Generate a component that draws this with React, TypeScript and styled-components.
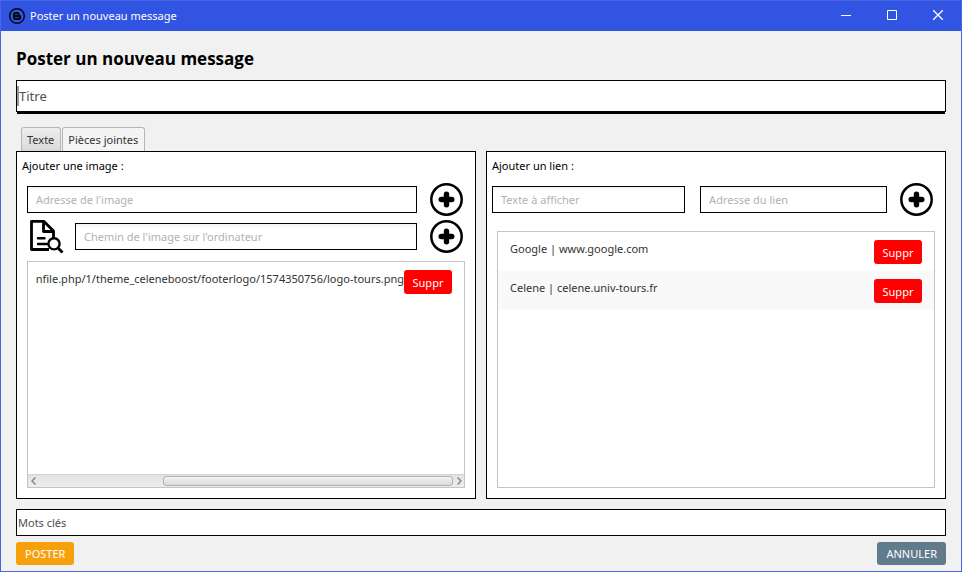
import React from "react";
import styled, { createGlobalStyle } from "styled-components";

const GlobalStyle = createGlobalStyle`
  *, *::before, *::after { box-sizing: border-box; }
  body { margin: 0; }
  body, button, input { font-family: "Noto Sans", "Open Sans", sans-serif; font-size: 11px; }
  button { cursor: pointer; margin: 0; }
`;

const Window = styled.div`
  display: flex;
  flex-direction: column;
  min-height: 100vh;
  background: #f1f1f1;
  border: 1px solid #4666e4;
  color: #000;
`;

const TitleBar = styled.header`
  display: flex;
  align-items: center;
  height: 30px;
  padding-left: 8px;
  background: #3254e2;
  color: #fff;
`;

const WindowTitle = styled.span`
  flex: 1;
  margin-left: 5px;
  line-height: 16px;
`;

const WindowButton = styled.button`
  display: flex;
  align-items: center;
  justify-content: center;
  width: 46px;
  height: 30px;
  padding: 0 0 2px;
  border: 0;
  background: none;
  color: #fff;
`;

const Content = styled.main`
  display: flex;
  flex-direction: column;
  flex: 1;
  padding: 16px 15px 6px;
`;

const Heading = styled.h1`
  margin: 0 0 9px;
  font-family: "Open Sans", "Noto Sans", sans-serif;
  font-size: 17px;
  line-height: 24px;
  font-weight: 700;
`;

const PlainInput = styled.input`
  width: 100%;
  height: 27px;
  padding: 0 1px;
  border: 1px solid #000;
  border-radius: 0;
  background: #fff;
  outline: 0;
  &::placeholder { color: #4d4d4d; opacity: 1; }
`;

const TitleField = styled.div`
  display: flex;
  align-items: center;
  height: 32px;
  border: 1px solid #000;
  background: #fff;
  box-shadow: 0 3px 0 -1px #000;
`;

const TitleInput = styled.input`
  flex: 1;
  min-width: 0;
  height: 20px;
  padding: 0;
  border: 0;
  border-left: 2px solid #999;
  outline: 0;
  font-size: 13px;
  background: none;
  &::placeholder { color: #4d4d4d; opacity: 1; }
`;

const Tabs = styled.div`
  display: flex;
  gap: 1px;
  margin-top: 15px;
  padding-left: 5px;
`;

const Tab = styled.button<{ $active?: boolean }>`
  height: 24px;
  padding: 0 6px 0 5px;
  border: 1px solid #b5b5b5;
  border-bottom: 0;
  border-radius: 3px 3px 0 0;
  color: #333;
  background: ${(p) => (p.$active ? "#f4f4f4" : "linear-gradient(#ededed, #dadada)")};
`;

const Panels = styled.div`
  display: grid;
  grid-template-columns: minmax(0, 1fr) minmax(0, 1fr);
  gap: 10px;
  flex: 1;
  margin-bottom: 10px;
`;

const Panel = styled.section`
  display: flex;
  flex-direction: column;
  border: 1px solid #000;
  background: #fff;
  padding: 6px 10px 10px;
`;

const PanelTitle = styled.h2`
  margin: 0 -5px 9px;
  font-size: 11px;
  line-height: 16px;
  font-weight: 400;
`;

const FormRow = styled.form<{ $wide?: boolean }>`
  display: flex;
  align-items: center;
  height: 33px;
  gap: 13px;
  margin: 0 2px 4px ${(p) => (p.$wide ? "-5px" : "0")};
`;

const Fields = styled.div`
  display: grid;
  grid-template-columns: 31fr 30fr;
  flex: 1;
  min-width: 0;
  gap: 15px;
`;

const Field = styled.input`
  flex: 1;
  min-width: 0;
  height: 27px;
  padding: 0 8px;
  border: 1px solid #000;
  border-radius: 0;
  outline: 0;
  background: linear-gradient(#f1f1f1, #fff 4px);
  &::placeholder { color: #b2b2b2; opacity: 1; }
`;

const IconButton = styled.button`
  display: flex;
  flex: none;
  padding: 0;
  border: 0;
  background: none;
  color: #000;

  svg { overflow: visible; }
`;

const List = styled.div<{ $offset?: boolean }>`
  display: flex;
  flex-direction: column;
  flex: 1;
  margin-top: ${(p) => (p.$offset ? "11px" : "4px")};
  border: 1px solid #c4c4c4;
  color: #333;
`;

const Items = styled.ul`
  flex: 1;
  margin: 0;
  padding: 0;
  list-style: none;
`;

const Item = styled.li<{ $alignEnd?: boolean }>`
  display: flex;
  align-items: flex-start;
  height: 39px;
  padding: 8px 12px;
  padding-left: ${(p) => (p.$alignEnd ? "0" : "12px")};
  &:nth-child(even) { background: #f9f9f9; }
`;

const ItemText = styled.span<{ $alignEnd?: boolean }>`
  display: flex;
  flex: 1;
  min-width: 0;
  overflow: hidden;
  white-space: nowrap;
  line-height: 18px;
  justify-content: ${(p) => (p.$alignEnd ? "flex-end" : "flex-start")};
`;

const tones = {
  danger: { colour: "#ff0000", height: "24px", padding: "0 8px" },
  primary: { colour: "#f4a10b", height: "23px", padding: "0 9px" },
  neutral: { colour: "#5f7b8c", height: "23px", padding: "0 9px" },
};

const ActionButton = styled.button<{ $tone: keyof typeof tones }>`
  flex: none;
  min-width: 48px;
  height: ${(p) => tones[p.$tone].height};
  padding: ${(p) => tones[p.$tone].padding};
  border: 0;
  border-radius: 3px;
  background: ${(p) => tones[p.$tone].colour};
  color: #fff;
`;

const ScrollBar = styled.div`
  display: flex;
  align-items: center;
  height: 13px;
  border-top: 1px solid #d4d4d4;
  background: linear-gradient(#e2e2e2, #ededed);
`;

const ScrollArrow = styled.button`
  display: flex;
  flex: none;
  justify-content: center;
  width: 10px;
  padding: 0;
  border: 0;
  background: none;
  color: #888;
`;

const Track = styled.div`
  display: flex;
  flex: 1;
  justify-content: flex-end;
  padding-right: 1px;
`;

const Thumb = styled.div`
  width: 70%;
  height: 10px;
  border: 1px solid #b0b0b0;
  border-radius: 3px;
  background: linear-gradient(#f2f2f2, #dcdcdc);
`;

const Footer = styled.footer`
  display: flex;
  justify-content: space-between;
  margin-top: 6px;
`;

const Logo = () => (
  <svg width="16" height="16" viewBox="0 0 16 16" fill="none" aria-hidden="true">
    <circle cx="8" cy="8" r="7.3" stroke="#05070f" strokeWidth="1.4" />
    <path d="M4 6.2A2.2 2.2 0 0 1 6.2 4h2.2a2.2 2.2 0 0 1 2.2 2.2c0 .8.2 1 .8 1.1.6.1.8.5.8 1.1v1.4A2.2 2.2 0 0 1 10 12H6.2A2.2 2.2 0 0 1 4 9.8Z" fill="#05070f" />
    <path d="M6.5 6.5h1.7M6.5 9.5h3" stroke="#3254e2" strokeWidth="0.8" strokeLinecap="round" />
  </svg>
);

const AddIcon = () => (
  <svg width="33" height="33" viewBox="0 0 33 33" fill="none" stroke="currentColor" aria-hidden="true">
    <circle cx="16.5" cy="16.5" r="15.2" strokeWidth="2.5" />
    <path d="M16.5 11.2v10.6M11.2 16.5h10.6" strokeWidth="5.4" strokeLinecap="round" />
  </svg>
);

const BrowseIcon = () => (
  <svg width="35" height="33" viewBox="0 0 35 33" fill="none" stroke="currentColor" strokeWidth="2.8" strokeLinejoin="round" aria-hidden="true">
    <path d="M22 29.5H4.5V1.4H17L26.5 11v7" />
    <path d="M16.5 2v9.5h10" />
    <path d="M11 18.2h6.5M11 24h9" strokeWidth="2.4" strokeLinecap="round" />
    <circle cx="27" cy="23.8" r="5.6" fill="#fff" strokeWidth="2.4" />
    <path d="M31 28l4.5 4.5" />
  </svg>
);

function AddButton({ label }: { label: string }) {
  return <IconButton type="submit" aria-label={label}><AddIcon /></IconButton>;
}

const links = ["Google | www.google.com", "Celene | celene.univ-tours.fr"];
const images = ["nfile.php/1/theme_celeneboost/footerlogo/1574350756/logo-tours.png"];
const stay = (e: React.FormEvent) => e.preventDefault();

export default function App() {
  return (
    <>
      <GlobalStyle />
      <Window>
        <TitleBar>
          <Logo />
          <WindowTitle>Poster un nouveau message</WindowTitle>
          <WindowButton aria-label="Réduire">
            <svg width="10" height="10" stroke="currentColor"><path d="M0 5.5h10" /></svg>
          </WindowButton>
          <WindowButton aria-label="Agrandir">
            <svg width="10" height="10" fill="none" stroke="currentColor"><path d="M.5.5h9v9h-9z" /></svg>
          </WindowButton>
          <WindowButton aria-label="Fermer">
            <svg width="10" height="10" stroke="currentColor" strokeWidth="1.3"><path d="M0 0l10 10M10 0L0 10" /></svg>
          </WindowButton>
        </TitleBar>
        <Content>
          <Heading>Poster un nouveau message</Heading>
          <TitleField><TitleInput aria-label="Titre" placeholder="Titre" /></TitleField>
          <Tabs role="tablist">
            <Tab role="tab" aria-selected={false}>Texte</Tab>
            <Tab role="tab" aria-selected $active>Pièces jointes</Tab>
          </Tabs>
          <Panels role="tabpanel">
            <Panel>
              <PanelTitle>Ajouter une image :</PanelTitle>
              <FormRow onSubmit={stay}>
                <Field aria-label="Adresse de l'image" placeholder="Adresse de l'image" />
                <AddButton label="Ajouter l'adresse" />
              </FormRow>
              <FormRow onSubmit={stay}>
                <IconButton type="button" aria-label="Parcourir"><BrowseIcon /></IconButton>
                <Field aria-label="Chemin de l'image" placeholder="Chemin de l'image sur l'ordinateur" />
                <AddButton label="Ajouter le fichier" />
              </FormRow>
              <List>
                <Items>
                  {images.map((t) => (
                    <Item key={t} $alignEnd>
                      <ItemText $alignEnd>{t}</ItemText>
                      <ActionButton $tone="danger">Suppr</ActionButton>
                    </Item>
                  ))}
                </Items>
                <ScrollBar>
                  <ScrollArrow aria-label="Défiler à gauche">
                    <svg width="5" height="8" fill="none" stroke="currentColor" strokeWidth="1.5"><path d="M4.500.5L1 4l3.500 3.500" /></svg>
                  </ScrollArrow>
                  <Track><Thumb /></Track>
                  <ScrollArrow aria-label="Défiler à droite">
                    <svg width="5" height="8" fill="none" stroke="currentColor" strokeWidth="1.5"><path d="M.5.5L4 4 .5 7.500" /></svg>
                  </ScrollArrow>
                </ScrollBar>
              </List>
            </Panel>
            <Panel>
              <PanelTitle>Ajouter un lien :</PanelTitle>
              <FormRow $wide onSubmit={stay}>
                <Fields>
                  <Field aria-label="Texte à afficher" placeholder="Texte à afficher" />
                  <Field aria-label="Adresse du lien" placeholder="Adresse du lien" />
                </Fields>
                <AddButton label="Ajouter le lien" />
              </FormRow>
              <List $offset>
                <Items>
                  {links.map((t) => (
                    <Item key={t}>
                      <ItemText>{t}</ItemText>
                      <ActionButton $tone="danger">Suppr</ActionButton>
                    </Item>
                  ))}
                </Items>
              </List>
            </Panel>
          </Panels>
          <PlainInput aria-label="Mots clés" placeholder="Mots clés" />
          <Footer>
            <ActionButton $tone="primary">POSTER</ActionButton>
            <ActionButton $tone="neutral">ANNULER</ActionButton>
          </Footer>
        </Content>
      </Window>
    </>
  );
}
